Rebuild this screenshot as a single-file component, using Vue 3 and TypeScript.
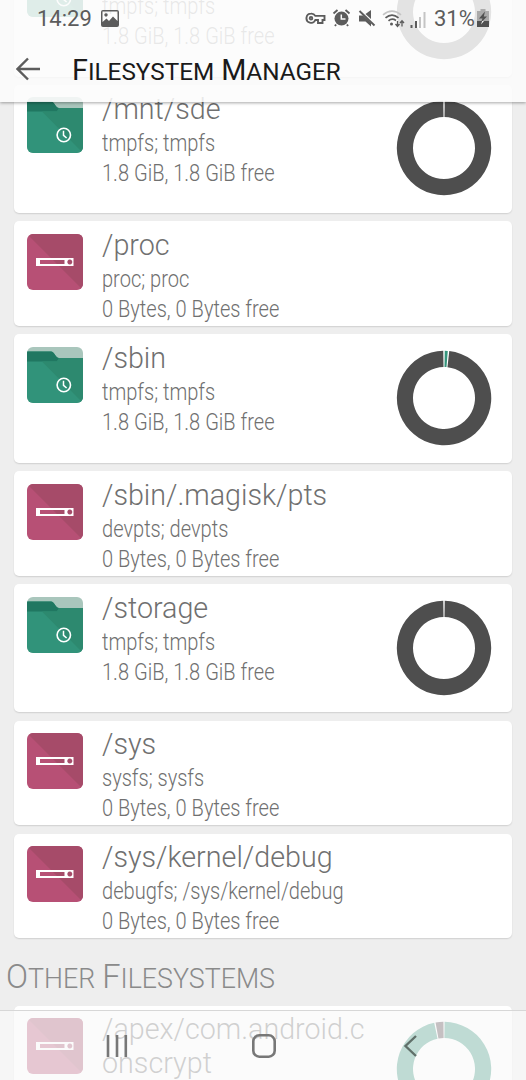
<script setup lang="ts">
interface Segment { path: string; color: string }
interface Mount {
  path: string
  detail: string
  size: string
  kind: 'folder' | 'drive'
  segments?: Segment[]
}

const DARK = '#4e4e4e'
const GREEN = '#36957d'

// Ring segment between two angles, in degrees clockwise from the top.
function arc(from: number, to: number): string {
  const outer = 47.2
  const inner = 31
  const at = (deg: number, r: number) => {
    const a = ((deg - 90) * Math.PI) / 180
    return `${(48 + r * Math.cos(a)).toFixed(2)} ${(48 + r * Math.sin(a)).toFixed(2)}`
  }
  const large = to - from > 180 ? 1 : 0
  return `M${at(from, outer)}A${outer} ${outer} 0 ${large} 1 ${at(to, outer)}L${at(to, inner)}A${inner} ${inner} 0 ${large} 0 ${at(from, inner)}Z`
}

const full: Segment[] = [{ path: arc(0.9, 359.1), color: DARK }]
const slight: Segment[] = [
  { path: arc(0.9, 4.6), color: GREEN },
  { path: arc(6.4, 359.1), color: DARK },
]
const mostlyUsed: Segment[] = [
  { path: arc(0.7, 348), color: GREEN },
  { path: arc(349.7, 359.3), color: '#4a3a42' },
]

const GIB = '1.8 GiB, 1.8 GiB free'
const ZERO = '0 Bytes, 0 Bytes free'

const mounts: Mount[] = [
  { path: '/mnt/sdd', detail: 'tmpfs; tmpfs', size: GIB, kind: 'folder', segments: full },
  { path: '/mnt/sde', detail: 'tmpfs; tmpfs', size: GIB, kind: 'folder', segments: full },
  { path: '/proc', detail: 'proc; proc', size: ZERO, kind: 'drive' },
  { path: '/sbin', detail: 'tmpfs; tmpfs', size: GIB, kind: 'folder', segments: slight },
  { path: '/sbin/.magisk/pts', detail: 'devpts; devpts', size: ZERO, kind: 'drive' },
  { path: '/storage', detail: 'tmpfs; tmpfs', size: GIB, kind: 'folder', segments: full },
  { path: '/sys', detail: 'sysfs; sysfs', size: ZERO, kind: 'drive' },
  { path: '/sys/kernel/debug', detail: 'debugfs; /sys/kernel/debug', size: ZERO, kind: 'drive' },
]
const apex: Mount = { path: '/apex/com.android.conscrypt', detail: '', size: '', kind: 'drive', segments: mostlyUsed }
const groups = [
  { heading: '', items: mounts },
  { heading: 'Other Filesystems', items: [apex] },
]
const title = 'Filesystem Manager'
</script>

<template>
  <div class="screen">
    <main class="list">
      <template v-for="group in groups" :key="group.heading">
        <h2 v-if="group.heading" class="heading caps">
          <span v-for="word in group.heading.split(' ')" :key="word" class="word">{{ word }}</span>
        </h2>
        <article v-for="m in group.items" :key="m.path" class="card" :class="{ tall: m.segments }">
          <svg v-if="m.kind === 'folder'" class="icon" viewBox="0 0 56 56">
            <defs><clipPath id="tile"><rect width="56" height="56" rx="6" /></clipPath></defs>
            <g clip-path="url(#tile)">
              <rect width="56" height="56" fill="#a9c6bc" />
              <path d="M0 4.500H24C27 4.500 29 11 32 11H56V56H0Z" fill="#31937a" />
              <path d="M0 4.500H24C27.500 4.500 28.500 11 32 11L30 14.500H0Z" fill="#207761" />
              <path d="M15 14.500H30L32 11H56V56Z" fill="#2d896f" />
            </g>
            <circle cx="36.800" cy="38" r="6.700" fill="none" stroke="#fff" stroke-width="1.600" />
            <path d="M36.500 33.800V38.400L39.600 41" fill="none" stroke="#fff" stroke-width="1.500" />
          </svg>
          <svg v-else class="icon" viewBox="0 0 56 56">
            <rect width="56" height="56" rx="6" fill="#b75075" />
            <path d="M2 2Q3.500 0 6 0H50Q56 0 56 6V50Q56 52.500 54 54Z" fill="#a64b69" />
            <path fill="#fff" fill-rule="evenodd" d="M9 24H46.500V32H9ZM13 26V30H37.500V26ZM42.800 25.500a2.500 2.500 0 1 0 .01 0Z" />
          </svg>
          <div class="info">
            <div class="path">{{ m.path }}</div>
            <div class="meta"><span>{{ m.detail }}</span></div>
            <div class="meta"><span>{{ m.size }}</span></div>
          </div>
          <svg v-if="m.segments" class="ring" viewBox="0 0 96 96">
            <path v-for="s in m.segments" :key="s.path" :d="s.path" :fill="s.color" />
          </svg>
        </article>
      </template>
    </main>

    <header class="top">
      <div class="status">
        <span class="clock">14:29</span>
        <svg class="picture" viewBox="0 0 18 17">
          <path fill="#5c5c5c" fill-rule="evenodd" d="M2 0H16Q18 0 18 2V15Q18 17 16 17H2Q0 17 0 15V2Q0 0 2 0ZM1.500 1.500V12L5.500 8.500L8 11L12 6.500L16.500 11V1.500ZM5 3.200a1.700 1.700 0 1 1-.01 0Z" />
        </svg>
        <svg class="indicators" viewBox="0 0 124 24">
          <g fill="none" stroke="#5c5c5c" stroke-width="1.900">
            <path d="M6 7.600a4.600 4.600 0 1 0 4.300 6.400H13V17H17.500V14H19.500V9.900H10.300A4.600 4.600 0 0 0 6 7.600Z" />
            <circle cx="6" cy="12.200" r="1.300" />
          </g>
          <circle cx="36.500" cy="12.600" r="7" fill="#5c5c5c" />
          <path d="M28.500 7.500L32.500 4M44.500 7.500L40.500 4M31 18.500L30 20M42 18.500L43 20" stroke="#5c5c5c" stroke-width="1.900" />
          <path d="M36.300 8.500V13H40.500" fill="none" stroke="#fafafa" stroke-width="1.500" />
          <path d="M54 9.500H58L66 17V20.500L60.500 15.500H54ZM60.500 8L66 4V13Z" fill="#5c5c5c" />
          <path d="M54.500 5L69.500 19.500" stroke="#5c5c5c" stroke-width="1.900" />
          <g fill="none" stroke-width="1.700">
            <path d="M78 8.800Q87 1.500 96 8.800" stroke="#c4c4c4" />
            <path d="M80.500 11.800Q87 6.300 93.500 11.800M83.500 14.800Q87 11.800 91 14.500" stroke="#5c5c5c" />
          </g>
          <circle cx="86.500" cy="18" r="1.500" fill="#5c5c5c" />
          <path d="M92.500 15V20M90.500 18L92.500 20.500L94.500 18M97 20.500V15M95 17L97 14.700L99 17" fill="none" stroke="#5c5c5c" stroke-width="1.300" />
          <path d="M106.500 19V22M111 15V22" stroke="#5c5c5c" stroke-width="2" />
          <path d="M115 11V22M119.500 6V22" stroke="#c4c4c4" stroke-width="2" />
        </svg>
        <span class="percent">31%</span>
        <svg class="battery" viewBox="0 0 12 18">
          <path d="M3.500 0H8.500V2H12V12H0V2H3.500Z" fill="#aaa" />
          <path d="M0 12H12V18H0Z" fill="#505050" />
          <path d="M8 2.500L2 9.500H5.500L4 13.500L10 7.500H6.800Z" fill="#505050" />
          <path d="M5.200 12L4 15.500L7 12Z" fill="#fafafa" />
        </svg>
      </div>
      <div class="toolbar">
        <svg class="back" viewBox="0 0 24 24">
          <path d="M24 12H1.500M12 1.500L1.500 12L12 22.500" fill="none" stroke="#5c5c5c" stroke-width="2.400" />
        </svg>
        <h1 class="title caps">
          <span v-for="word in title.split(' ')" :key="word" class="word">{{ word }}</span>
        </h1>
      </div>
    </header>

    <nav class="bottom">
      <svg viewBox="0 0 22 22"><path d="M2 0V22M11 0V22M19.800 0V22" stroke="#777" stroke-width="2.600" /></svg>
      <svg viewBox="0 0 24 24"><rect x="1.300" y="1.300" width="21.400" height="21.400" rx="6" fill="none" stroke="#777" stroke-width="2.600" /></svg>
      <svg viewBox="0 0 22 22"><path d="M15 1L4.500 11L15 21" fill="none" stroke="#60706a" stroke-width="2.400" /></svg>
    </nav>
  </div>
</template>

<style>
body { margin: 0; overflow: hidden; }
</style>

<style scoped>
.screen {
  position: relative;
  width: 526px;
  height: 1080px;
  overflow: hidden;
  background: #eeeeee;
  font-family: Roboto, "Liberation Sans", sans-serif;
  font-weight: 300;
}
.list {
  display: flex;
  flex-direction: column;
  gap: 8.300px;
  margin-top: -51.800px;
  padding: 0 14px;
}
.card {
  box-sizing: border-box;
  display: flex;
  flex: none;
  height: 104.700px;
  padding: 12.600px 0 0 12.800px;
  border-radius: 5px;
  background: #fff;
  box-shadow: 0 1px 1.500px rgba(0, 0, 0, 0.13);
}
.card.tall { height: 128.300px; }
.icon { width: 56px; height: 56px; flex: none; }
.info {
  width: 268px;
  margin: -5.900px 0 0 19.200px;
  color: #707070;
  white-space: nowrap;
}
.path {
  width: 280px;
  font-size: 30px;
  line-height: 34px;
  white-space: normal;
  word-break: break-all;
  transform: scaleX(0.956);
  transform-origin: 0 0;
}
.meta { height: 30.200px; font-size: 23px; line-height: 35px; }
.meta span { display: inline-block; transform: scaleX(0.872); transform-origin: 0 0; }
.ring { width: 96px; height: 96px; margin: 3px 0 0 26px; flex: none; }
.caps { display: flex; text-transform: uppercase; white-space: nowrap; }
.word { display: block; }
.heading {
  height: 50.800px;
  margin: 0 0 0 -8px;
  gap: 7px;
  font-size: 26.800px;
  line-height: 61px;
  font-weight: 300;
  color: #8a8a8a;
}
.heading .word::first-letter { font-size: 32.500px; }
.top {
  position: absolute;
  inset: 0 0 auto;
  height: 102px;
  background: rgba(251, 251, 251, 0.860);
  box-shadow: 0 1px 3px rgba(0, 0, 0, 0.350);
}
.status { display: flex; height: 36px; align-items: center; color: #5c5c5c; font-weight: 400; font-size: 22px; }
.clock { width: 54px; margin-left: 37px; }
.picture { width: 18px; height: 17px; margin-left: 10px; }
.indicators { width: 124px; height: 24px; margin: -1px 0 0 186px; }
.percent { width: 40px; margin-left: 5px; }
.battery { width: 12px; height: 18px; margin-left: 3px; }
.toolbar { display: flex; height: 66px; align-items: center; }
.back { width: 24px; height: 24px; margin-left: 16px; }
.title { margin: 4px 0 0 32px; gap: 7px; font-size: 24.300px; line-height: 36px; font-weight: 400; color: #1a1a1a; }
.title .word::first-letter { font-size: 28.800px; }
.bottom {
  position: absolute;
  inset: auto 0 0;
  box-sizing: border-box;
  height: 70px;
  display: flex;
  justify-content: space-between;
  align-items: center;
  padding: 0 103px 0 106px;
  border-top: 1px solid #d7d7d7;
  background: rgba(250, 250, 250, 0.700);
}
.bottom svg { width: 22px; height: 22px; }
.bottom svg:nth-child(2) { width: 24px; height: 24px; margin-left: -2px; }
</style>
